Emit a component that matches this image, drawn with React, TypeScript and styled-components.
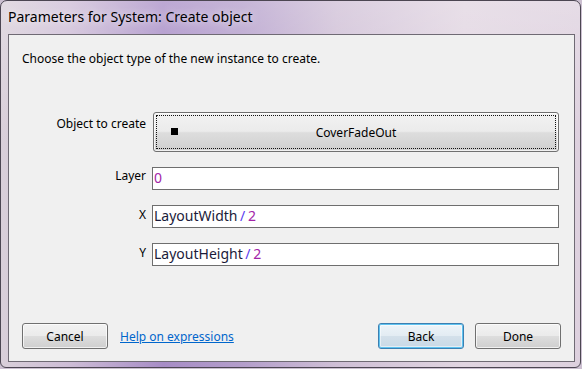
import styled, { createGlobalStyle } from 'styled-components';

const GlobalStyle = createGlobalStyle`
  html, body {
    margin: 0;
    padding: 0;
    width: 582px;
    height: 369px;
    overflow: hidden;
    background: #cbbfd0;
  }
  * { box-sizing: border-box; }
`;

const Window = styled.div`
  width: 581px;
  height: 368px;
  display: flex;
  flex-direction: column;
  padding: 0 5px 5px 7px;
  border: 1px solid #4c4652;
  border-radius: 7px 7px 6px 6px;
  background:
    linear-gradient(180deg, rgba(255, 255, 255, 0.25) 0%, rgba(255, 255, 255, 0) 40%),
    linear-gradient(90deg, #d9cfd9 0%, #cdbcd6 12%, #a78cc6 28%, #b49ecb 42%, #cfbfd6 58%, #e1d5e1 80%, #ddd0de 100%);
  font-family: 'Noto Sans', 'Open Sans', sans-serif;
`;

const TitleBar = styled.div`
  height: 33px;
  display: flex;
  align-items: center;
  padding: 0 0 2px 0;
  font-size: 14px;
  color: #000;
  text-shadow: 0 0 8px rgba(255, 255, 255, 0.9);
`;

const Client = styled.div`
  flex: 1;
  display: flex;
  flex-direction: column;
  background: #f0f0f0;
  border: 1px solid #6f6a74;
  padding: 0 13px 12px 0;
`;

const Intro = styled.div`
  font-size: 12px;
  color: #000;
  padding: 15px 0 0 13px;
  height: 77px;
`;

const Form = styled.div`
  display: grid;
  grid-template-columns: 137px 407px;
  column-gap: 6px;
  row-gap: 15px;
  align-items: start;
`;

const Label = styled.div<{ $offset: number }>`
  font-size: 12px;
  color: #000;
  text-align: right;
  padding-top: ${(p) => p.$offset}px;
  line-height: 16px;
`;

const ComboButton = styled.button`
  position: relative;
  margin-left: 1px;
  width: 406px;
  height: 40px;
  border: 1px solid #707070;
  border-radius: 3px;
  background: linear-gradient(180deg, #f2f2f2 0%, #ebebeb 48%, #dddddd 52%, #cfcfcf 100%);
  box-shadow: inset 0 0 0 1px rgba(255, 255, 255, 0.7);
  font-family: inherit;
  font-size: 12px;
  color: #000;
  display: flex;
  align-items: center;
  justify-content: center;
  padding: 0;
  &::after {
    content: '';
    position: absolute;
    inset: 2px;
    border: 1px dotted #111;
  }
`;

const Swatch = styled.span`
  position: absolute;
  left: 17px;
  top: 15px;
  width: 7px;
  height: 7px;
  background: #000;
`;

const Field = styled.div`
  width: 407px;
  height: 23px;
  border: 1px solid #6e6e6e;
  background: #fff;
  font-size: 14px;
  line-height: 20px;
  padding-left: 1px;
  color: #1b1b3a;
  white-space: pre;
  word-spacing: -1px;
`;

const Token = styled.span<{ $kind: 'num' | 'op' }>`
  color: ${(p) => (p.$kind === 'num' ? '#a324a8' : '#5a3cf0')};
`;

const Spacer = styled.div`
  flex: 1;
`;

const Footer = styled.div`
  display: flex;
  align-items: center;
  padding-left: 13px;
`;

const Button = styled.button<{ $primary?: boolean }>`
  width: 86px;
  height: 26px;
  border-radius: 3px;
  border: 1px solid ${(p) => (p.$primary ? '#3c7fb1' : '#707070')};
  background: ${(p) =>
    p.$primary
      ? 'linear-gradient(180deg, #edf4f9 0%, #e3ecf3 48%, #d3e0ea 52%, #c9d9e6 100%)'
      : 'linear-gradient(180deg, #f2f2f2 0%, #ebebeb 48%, #dddddd 52%, #cfcfcf 100%)'};
  box-shadow: ${(p) =>
    p.$primary
      ? 'inset 0 0 0 1px #5fc3f0, inset 0 0 0 2px rgba(255,255,255,0.5)'
      : 'inset 0 0 0 1px rgba(255, 255, 255, 0.7)'};
  font-family: inherit;
  font-size: 12px;
  color: #000;
  padding: 0;
`;

const HelpLink = styled.a`
  margin-left: 12px;
  font-size: 12px;
  color: #0066cc;
  text-decoration: underline;
  cursor: pointer;
`;

const Right = styled.div`
  margin-left: auto;
  display: flex;
  gap: 11px;
`;

export default function App() {
  return (
    <>
      <GlobalStyle />
      <Window>
        <TitleBar>Parameters for System: Create object</TitleBar>
        <Client>
          <Intro>Choose the object type of the new instance to create.</Intro>
          <Form>
            <Label $offset={4}>Object to create</Label>
            <ComboButton>
              <Swatch />
              CoverFadeOut
            </ComboButton>
            <Label $offset={1}>Layer</Label>
            <Field>
              <Token $kind="num">0</Token>
            </Field>
            <Label $offset={2}>X</Label>
            <Field>
              LayoutWidth <Token $kind="op">/</Token> <Token $kind="num">2</Token>
            </Field>
            <Label $offset={2}>Y</Label>
            <Field>
              LayoutHeight <Token $kind="op">/</Token> <Token $kind="num">2</Token>
            </Field>
          </Form>
          <Spacer />
          <Footer>
            <Button>Cancel</Button>
            <HelpLink>Help on expressions</HelpLink>
            <Right>
              <Button $primary>Back</Button>
              <Button>Done</Button>
            </Right>
          </Footer>
        </Client>
      </Window>
    </>
  );
}
